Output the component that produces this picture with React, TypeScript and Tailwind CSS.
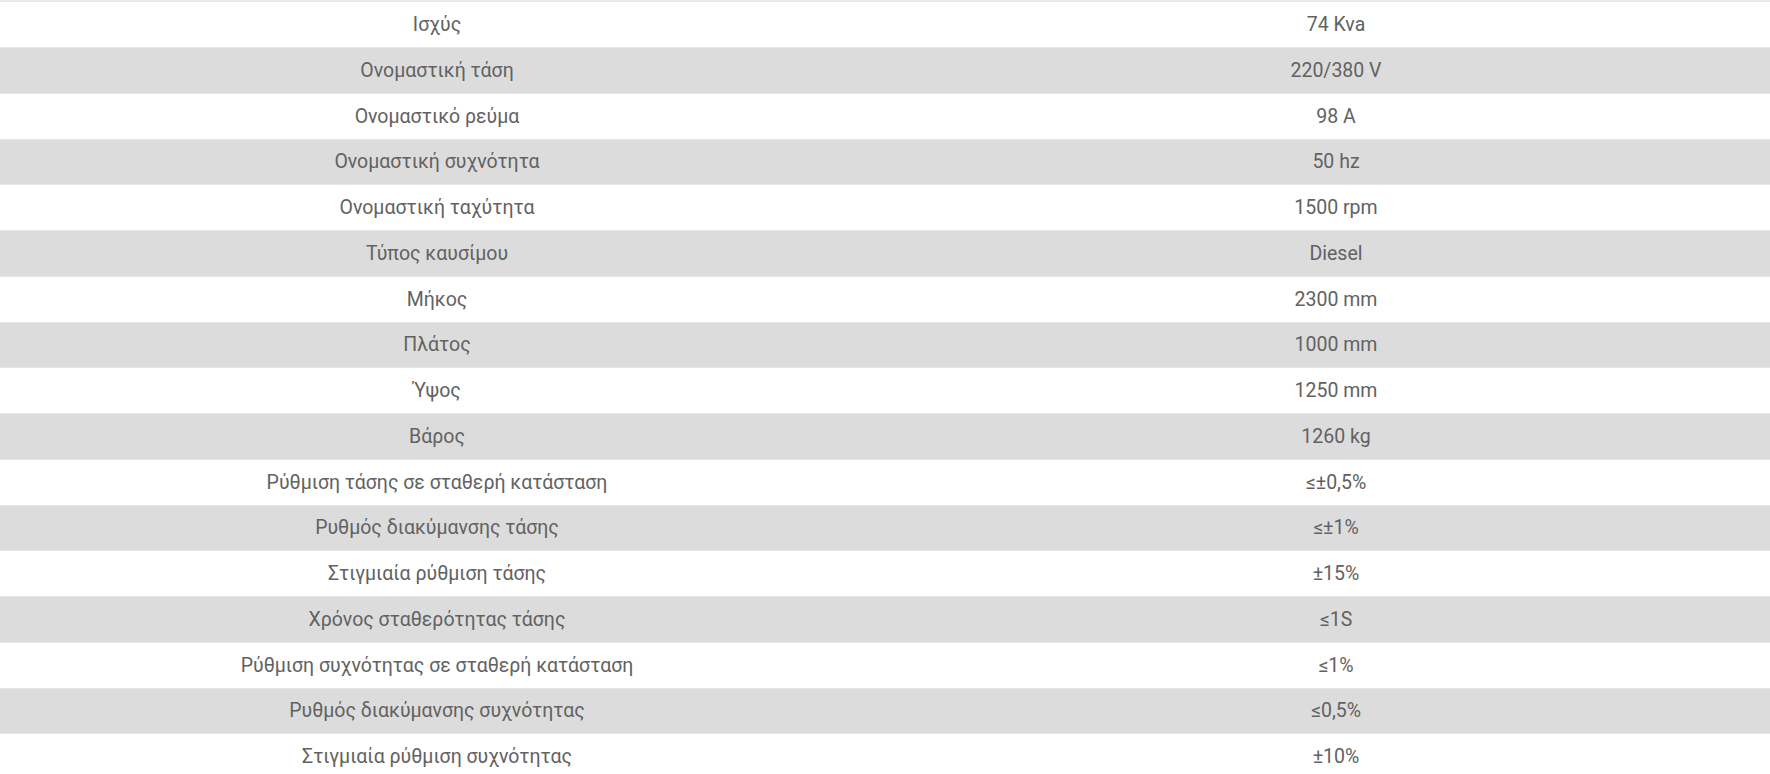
const specs: [string, string][] = [
  ['Ισχύς', '74 Kva'],
  ['Ονομαστική τάση', '220/380 V'],
  ['Ονομαστικό ρεύμα', '98 A'],
  ['Ονομαστική συχνότητα', '50 hz'],
  ['Ονομαστική ταχύτητα', '1500 rpm'],
  ['Τύπος καυσίμου', 'Diesel'],
  ['Μήκος', '2300 mm'],
  ['Πλάτος', '1000 mm'],
  ['Ύψος', '1250 mm'],
  ['Βάρος', '1260 kg'],
  ['Ρύθμιση τάσης σε σταθερή κατάσταση', '≤±0,5%'],
  ['Ρυθμός διακύμανσης τάσης', '≤±1%'],
  ['Στιγμιαία ρύθμιση τάσης', '±15%'],
  ['Χρόνος σταθερότητας τάσης', '≤1S'],
  ['Ρύθμιση συχνότητας σε σταθερή κατάσταση', '≤1%'],
  ['Ρυθμός διακύμανσης συχνότητας', '≤0,5%'],
  ['Στιγμιαία ρύθμιση συχνότητας', '±10%'],
];

export default function App() {
  return (
    <div className="w-[1770px] h-[774px] overflow-hidden bg-white font-['Roboto',sans-serif] text-[19.5px] text-[#626262]">
      <div className="border-t border-[#ebebeb] pt-[0.25px]">
        {specs.map(([label, value], i) => (
          <div
            key={label}
            className={`grid grid-cols-[874px_1fr] h-[45.75px] border-t border-[#e6e6e6] ${
              i % 2 === 1 ? 'bg-[#dcdcdc]' : 'bg-white'
            }`}
          >
            <div className="flex items-center justify-center">{label}</div>
            <div className="flex items-center justify-center pl-[28px]">{value}</div>
          </div>
        ))}
      </div>
    </div>
  );
}
